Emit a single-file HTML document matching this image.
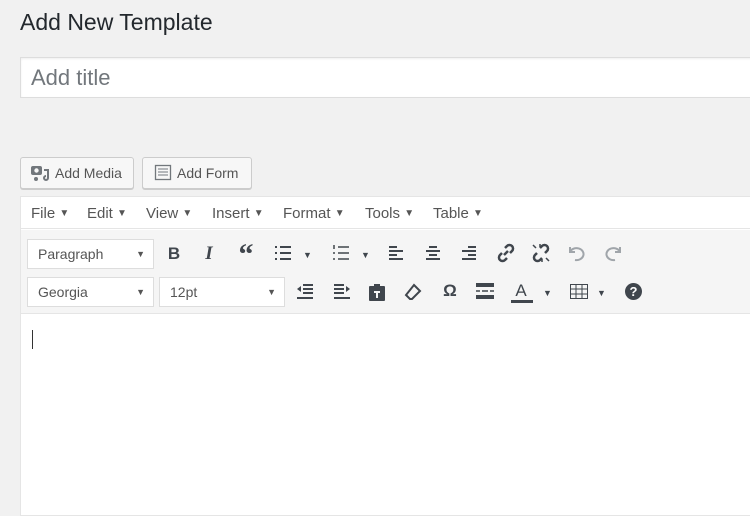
<!DOCTYPE html>
<html><head><style>
*{box-sizing:border-box;margin:0;padding:0}
body{width:750px;height:508px;background:#f1f1f1;font-family:"Liberation Sans",sans-serif;color:#23282d;position:relative;overflow:hidden}
.a{position:absolute}
h1{position:absolute;left:20px;top:9px;font-size:23px;font-weight:400;color:#23282d}
.title{left:20px;top:57px;width:740px;height:41px;background:#fff;border:1px solid #ddd;font-size:22px;color:#72777c;padding:7px 10px;box-shadow:inset 0 1px 2px rgba(0,0,0,.07)}
.btn{top:157px;height:32px;border:1px solid #ccc;border-radius:3px;background:#f7f7f7;box-shadow:0 1px 0 #ccc;font-size:14px;color:#555;padding:7px 0 0 34px}
.ed{left:20px;top:196px;width:740px;height:320px;border:1px solid #e5e5e5;background:#fff}
.menu{left:21px;top:197px;width:740px;height:32px;background:#fff;border-bottom:1px solid #e5e5e5;font-size:15px;color:#555}
.menu span{position:absolute;top:8px}
.menu b{font-size:10px;font-weight:400;vertical-align:2px}
.tb{left:21px;top:230px;width:740px;height:84px;background:#f5f5f5;border-bottom:1px solid #e5e5e5}
.sel{height:30px;background:#fff;border:1px solid #ddd;font-size:14px;color:#555;padding:6px 0 0 10px}
.sel i{position:absolute;right:8px;top:9px;font-style:normal;font-size:9px}
.ic{position:absolute;font-size:17px;color:#40464d;text-align:center;width:24px}
.car{font-size:9px;color:#40464d;position:absolute}
svg.a path{fill:none}
svg.a path.f{fill:#40464d}
</style></head><body>
<h1>Add New Template</h1>
<div class="a title">Add title</div>
<div class="a btn" style="left:20px;width:114px"><svg class="a" style="left:9px;top:6px" width="20" height="18"><rect x="1" y="2" width="11" height="9" rx="2" fill="#72777c"/><circle cx="6.5" cy="6.5" r="2.2" fill="#f7f7f7"/><path d="M14 6h4v8a2 2 0 1 1-2-2" stroke="#72777c" stroke-width="2"/><circle cx="6" cy="15" r="2" fill="#72777c"/></svg>Add Media</div>
<div class="a btn" style="left:142px;width:110px"><svg class="a" style="left:11px;top:6px" width="18" height="18"><rect x="1.5" y="1.5" width="15" height="14" fill="none" stroke="#72777c" stroke-width="1.3"/><path d="M4 5h10M4 8h10M4 11h10" stroke="#72777c" stroke-width="1"/></svg>Add Form</div>
<div class="a ed"></div>
<div class="a menu"><span style="left:10px">File <b>▼</b></span><span style="left:66px">Edit <b>▼</b></span><span style="left:125px">View <b>▼</b></span><span style="left:191px">Insert <b>▼</b></span><span style="left:262px">Format <b>▼</b></span><span style="left:344px">Tools <b>▼</b></span><span style="left:412px">Table <b>▼</b></span></div>
<div class="a tb"></div>
<div class="a sel" style="left:27px;top:239px;width:127px">Paragraph<i>▼</i></div>
<div class="a sel" style="left:27px;top:277px;width:127px">Georgia<i>▼</i></div>
<div class="a sel" style="left:159px;top:277px;width:126px">12pt<i>▼</i></div>
<div class="ic" style="left:162px;top:244px;font-weight:bold">B</div>
<div class="ic" style="left:197px;top:243px;font-style:italic;font-family:'Liberation Serif';font-weight:bold;font-size:19px">I</div>
<div class="ic" style="left:234px;top:238px;font-weight:bold;font-size:30px;font-family:'Liberation Serif'">“</div>
<svg class="a" style="left:274px;top:245px" width="18" height="16" stroke="#40464d" stroke-width="2"><path d="M1 2h2M1 8h2M1 14h2M6 2h11M6 8h11M6 14h11"/></svg><span class="car" style="left:303px;top:250px">▼</span>
<svg class="a" style="left:332px;top:245px" width="18" height="16" stroke="#40464d" stroke-width="1.5"><path d="M2 0v4M1 8h2M1 14h2M6 2h11M6 8h11M6 14h11"/></svg><span class="car" style="left:361px;top:250px">▼</span>
<svg class="a" style="left:388px;top:245px" width="18" height="16" stroke="#40464d" stroke-width="2"><path d="M1 2h8M1 6h14M1 10h8M1 14h14"/></svg>
<svg class="a" style="left:424px;top:245px" width="18" height="16" stroke="#40464d" stroke-width="2"><path d="M5 2h8M2 6h14M5 10h8M2 14h14"/></svg>
<svg class="a" style="left:460px;top:245px" width="18" height="16" stroke="#40464d" stroke-width="2"><path d="M8 2h8M2 6h14M8 10h8M2 14h14"/></svg>
<svg class="a" style="left:496px;top:243px" width="20" height="20" stroke="#40464d" stroke-width="2.5"><path d="M8 12L12 8M9 5l2-2a3.5 3.5 0 0 1 5 5l-2 2M11 15l-2 2a3.5 3.5 0 0 1-5-5l2-2"/></svg>
<svg class="a" style="left:531px;top:243px" width="20" height="20" stroke="#40464d" stroke-width="2.5"><path d="M9 5l2-2a3.5 3.5 0 0 1 5 5l-2 2M11 15l-2 2a3.5 3.5 0 0 1-5-5l2-2"/><path d="M2 2l3 3M18 18l-3-3M9 1v3M11 19v-3" stroke-width="1.5"/></svg>
<svg class="a" style="left:567px;top:244px" width="20" height="18" stroke="#a0a5aa" stroke-width="2"><path d="M3 3v5h5M3 8a7 6 0 1 1 5 8"/></svg>
<svg class="a" style="left:603px;top:244px" width="20" height="18" stroke="#a0a5aa" stroke-width="2"><path d="M17 3v5h-5M17 8a7 6 0 1 0-5 8"/></svg>
<svg class="a" style="left:296px;top:284px" width="18" height="16" stroke="#40464d" stroke-width="2"><path d="M7 1h10M7 5h10M7 9h10M1 14h16"/><path class="f" d="M1 5l4-3v6z" stroke-width="0"/></svg>
<svg class="a" style="left:333px;top:284px" width="18" height="16" stroke="#40464d" stroke-width="2"><path d="M1 1h10M1 5h10M1 9h10M1 14h16"/><path class="f" d="M17 5l-4-3v6z" stroke-width="0"/></svg>
<svg class="a" style="left:368px;top:283px" width="18" height="18"><rect x="1" y="3" width="16" height="15" rx="1" fill="#40464d"/><rect x="6" y="1" width="6" height="4" fill="#40464d"/><path d="M6 9h6M9 9v6" stroke="#f5f5f5" stroke-width="2"/></svg>
<svg class="a" style="left:404px;top:283px" width="18" height="18" stroke="#40464d" stroke-width="2"><path d="M10 2l6 6-8 8H6L2 12z"/></svg>
<div class="ic" style="left:438px;top:281px;font-weight:bold">Ω</div>
<svg class="a" style="left:476px;top:283px" width="18" height="16"><rect x="0" y="0" width="18" height="4" fill="#40464d"/><rect x="0" y="12" width="18" height="4" fill="#40464d"/><path d="M0 8h4M6 8h6M14 8h4" stroke="#40464d" stroke-width="1.5"/></svg>
<div class="ic" style="left:509px;top:281px">A</div><div class="a" style="left:511px;top:300px;width:22px;height:3px;background:#40464d"></div><span class="car" style="left:543px;top:288px">▼</span>
<svg class="a" style="left:570px;top:284px" width="18" height="15"><rect x="0.5" y="0.5" width="17" height="14" fill="none" stroke="#40464d"/><path d="M0 5h18M0 10h18M6 0v15M12 0v15" stroke="#40464d"/></svg><span class="car" style="left:597px;top:288px">▼</span>
<div class="a" style="left:625px;top:283px;width:17px;height:17px;border-radius:50%;background:#40464d;color:#fff;font-size:13px;font-weight:bold;text-align:center;line-height:17px">?</div>
<div class="a" style="left:32px;top:330px;width:1px;height:19px;background:#333"></div>
</body></html>
